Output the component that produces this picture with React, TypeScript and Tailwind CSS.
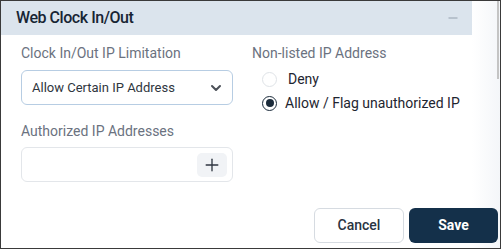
import { ChevronDown, Minus, Plus } from "lucide-react";

export default function App() {
  return (
    <div className="relative w-[501px] h-[249px] overflow-hidden border border-[#3a3a3a] bg-white font-['Roboto',sans-serif]">
      {/* right gutter + scrollbar */}
      <div className="absolute right-0 top-0 bottom-0 w-[28px] bg-gradient-to-r from-white to-[#f4f6f9]" />
      <div className="absolute right-[1px] top-0 h-[78px] w-[2px] bg-[#c4c4c4]" />

      <div className="relative">
        <div className="mr-[28px] h-[34px] bg-[#dbe4ed] flex items-center justify-between pl-[15px] pr-[12px]">
          <h2 className="text-[16px] font-medium text-[#172534] tracking-[-0.45px]">Web Clock In/Out</h2>
          <Minus size={14} strokeWidth={1.5} className="text-[#8a96a3]" />
        </div>

        <div className="flex pl-[20px] pt-[8px]">
          <div className="w-[212px]">
            <label className="block text-[14px] leading-[20px] text-[#6b7280]">Clock In/Out IP Limitation</label>
            <div className="mt-[7px] h-[35px] rounded-[6px] border border-[#b7cde3] flex items-center justify-between pl-[10px] pr-[8px]">
              <span className="text-[13px] text-[#2f3640]">Allow Certain IP Address</span>
              <ChevronDown size={16} strokeWidth={3} className="text-[#4b5058]" />
            </div>

            <label className="block mt-[16px] text-[14px] leading-[20px] text-[#6b7280]">Authorized IP Addresses</label>
            <div className="mt-[6px] h-[35px] rounded-[6px] border border-[#e3e6ea] flex items-center justify-end pr-[5px]">
              <button className="w-[30px] h-[24px] rounded-[5px] bg-[#f1f3f6] flex items-center justify-center">
                <Plus size={20} strokeWidth={1.6} className="text-[#2f3641]" />
              </button>
            </div>
          </div>

          <div className="ml-[19px]">
            <label className="block text-[14px] leading-[20px] text-[#6b7280]">Non-listed IP Address</label>
            <div className="mt-[5px] flex items-center h-[22px] pl-[10px]">
              <span className="w-[15px] h-[15px] rounded-full border border-[#dfe3e7]" />
              <span className="ml-[11px] text-[14px] text-[#1e2530]">Deny</span>
            </div>
            <div className="mt-[2px] flex items-center h-[22px] pl-[10px]">
              <span className="w-[15px] h-[15px] rounded-full border-[1.5px] border-[#1b2b3b] flex items-center justify-center">
                <span className="w-[8px] h-[8px] rounded-full bg-[#1b2b3b]" />
              </span>
              <span className="ml-[8px] text-[14px] text-[#1e2530]">Allow / Flag unauthorized IP</span>
            </div>
          </div>
        </div>

        <div className="flex justify-end gap-[5px] pr-[2px] mt-[26px]">
          <button className="w-[90px] h-[35px] rounded-[6px] border border-[#d6dbe1] bg-white text-[14px] font-medium text-[#2a3442]">Cancel</button>
          <button className="w-[89px] h-[35px] rounded-[6px] bg-[#14304a] text-[14px] font-bold text-white">Save</button>
        </div>
      </div>
    </div>
  );
}
